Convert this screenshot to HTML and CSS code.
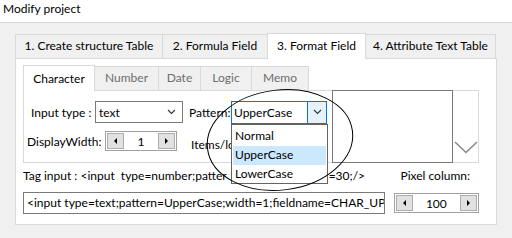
FILE: index.html
```html
<!DOCTYPE html>
<html lang="en">
<head>
    <meta charset="UTF-8">
    <title>Modify project</title>
    <link rel="stylesheet" href="styles.css">
</head>
<body>
    <div class="title">Modify project</div>

    <div class="window">
        <!-- Glowne zakladki -->
        <div class="tabs">
            <div class="tab" style="width: 148px;">1. Create structure Table</div>
            <div class="tab" style="width: 105px;">2. Formula Field</div>
            <div class="tab active" style="width: 99px;">3. Format Field</div>
            <div class="tab" style="width: 130px;">4. Attribute Text Table</div>
        </div>

        <div class="page">
            <!-- Zakladki typu pola -->
            <div class="subtabs">
                <div class="subtab active" style="width: 72px;">Character</div>
                <div class="subtab" style="width: 64px;">Number</div>
                <div class="subtab" style="width: 42px;">Date</div>
                <div class="subtab" style="width: 51px;">Logic</div>
                <div class="subtab" style="width: 57px;">Memo</div>
            </div>

            <div class="subpage">
                <div class="fields">
                    <div class="row row1">
                        <span class="lbl lbl-input">Input type :</span>
                        <div class="select">
                            <span>text</span>
                            <svg class="chev" width="9" height="6" viewBox="0 0 9 6"><polyline points="1,1 4.5,4.5 8,1" fill="none" stroke="#333" stroke-width="1.1"/></svg>
                        </div>
                        <span class="lbl lbl-pattern">Pattern:</span>
                        <div class="combo">
                            <span class="combo-text">UpperCase</span>
                            <div class="combo-btn">
                                <svg width="9" height="6" viewBox="0 0 9 6"><polyline points="1,1 4.5,4.5 8,1" fill="none" stroke="#333" stroke-width="1.1"/></svg>
                            </div>
                            <div class="combo-list">
                                <div class="item">Normal</div>
                                <div class="item selected">UpperCase</div>
                                <div class="item">LowerCase</div>
                            </div>
                        </div>
                    </div>
                    <div class="row row2">
                        <span class="lbl lbl-width">DisplayWidth:</span>
                        <div class="spin spin-small">
                            <div class="spin-btn"><span class="tri-left"></span></div>
                            <span class="spin-val">1</span>
                            <div class="spin-btn"><span class="tri-right"></span></div>
                        </div>
                        <span class="lbl lbl-items">Items/lo</span>
                    </div>
                </div>
                <div class="memo"></div>
                <div class="scroll-arrow">
                    <svg width="24" height="13" viewBox="0 0 24 13"><polyline points="1,1 12,11.5 23,1" fill="none" stroke="#8a8a8a" stroke-width="1.6"/></svg>
                </div>
            </div>

            <div class="tag-row">
                <span class="tag-text">Tag input : &lt;input&nbsp; type=number;patter<span class="tag-gap"></span>=30;/&gt;</span>
                <span class="pixel-lbl">Pixel column:</span>
            </div>

            <div class="out-row">
                <div class="out-field">&lt;input type=text;pattern=UpperCase;width=1;fieldname=CHAR_UPF</div>
                <div class="spin spin-pixel">
                    <div class="spin-btn"><span class="tri-left"></span></div>
                    <span class="spin-val">100</span>
                    <div class="spin-btn"><span class="tri-right"></span></div>
                </div>
            </div>
        </div>
    </div>

    <!-- Zaznaczenie odrecznym kolkiem -->
    <svg class="circle" width="512" height="238" viewBox="0 0 512 238">
        <ellipse cx="280" cy="140" rx="73" ry="50" transform="rotate(-7 280 140)" fill="none" stroke="#000" stroke-width="1"/>
    </svg>
</body>
</html>
```

FILE: styles.css
```css
/* Styl ogolny */
body {
    margin: 0;
    width: 512px;
    height: 238px;
    overflow: hidden;
    background: #fff;
    font-family: Lato, "Noto Sans", sans-serif;
    font-size: 12px;
    color: #000;
    position: relative;
}

.title {
    height: 22px;
    line-height: 17px;
    padding-left: 3px;
    border-bottom: 1px solid #dadada;
}

.window {
    background: #f0f0f0;
    height: 215px;
    padding: 9px 0 0 15px;
    box-sizing: border-box;
}

/* Zakladki */
.tabs {
    display: flex;
    align-items: flex-end;
    height: 26px;
}

.tab {
    box-sizing: border-box;
    height: 24px;
    line-height: 22px;
    text-align: center;
    white-space: nowrap;
    border: 1px solid #d9d9d9;
    border-bottom: none;
    border-left: none;
    background: #f0f0f0;
}

.tab:first-child {
    border-left: 1px solid #d9d9d9;
}

.tab.active {
    height: 26px;
    line-height: 24px;
    background: #fff;
    border-left: 1px solid #d9d9d9;
    margin-left: -1px;
    margin-bottom: -1px;
    position: relative;
    z-index: 1;
}

.page {
    box-sizing: border-box;
    width: 482px;
    height: 167px;
    background: #fff;
    border: 1px solid #d9d9d9;
    padding: 5px 17px 0 7px;
}

.subtabs {
    display: flex;
    align-items: flex-end;
    height: 26px;
}

.subtab {
    box-sizing: border-box;
    height: 24px;
    line-height: 22px;
    text-align: center;
    color: #6d6d6d;
    background: #f0f0f0;
    border: 1px solid #d9d9d9;
    border-bottom: none;
    border-left: none;
}

.subtab.active {
    height: 26px;
    line-height: 25px;
    color: #000;
    background: #fff;
    border-left: 1px solid #d9d9d9;
    margin-bottom: -1px;
    position: relative;
    z-index: 1;
}

.subpage {
    box-sizing: border-box;
    height: 73px;
    border: 1px solid #d9d9d9;
    display: flex;
}

.fields {
    width: 308px;
    position: relative;
    z-index: 2;
}

.row {
    display: flex;
    align-items: center;
}

.row1 {
    margin-top: 10px;
    height: 22px;
}

.row2 {
    margin-top: 8px;
    height: 20px;
}

.lbl { white-space: nowrap; }
.lbl-input { margin-left: 7px; width: 64px; }
.lbl-pattern { margin-left: 6px; width: 42px; }
.lbl-width { margin-left: 3px; width: 78px; }
.lbl-items { margin-left: 14px; margin-top: 6px; }

.select {
    box-sizing: border-box;
    width: 88px;
    height: 22px;
    border: 1px solid #7a7a7a;
    display: flex;
    align-items: center;
    justify-content: space-between;
    padding: 0 6px 0 3px;
}

.combo {
    box-sizing: border-box;
    width: 96px;
    height: 23px;
    border: 1px solid #0078d7;
    display: flex;
    align-items: center;
    position: relative;
    background: #fff;
}

.combo-text {
    flex: 1;
    padding-left: 2px;
}

.combo-btn {
    box-sizing: border-box;
    width: 19px;
    height: 21px;
    background: #e5f1fb;
    border-left: 1px solid #0078d7;
    display: flex;
    align-items: center;
    justify-content: center;
}

.combo-list {
    position: absolute;
    left: -1px;
    top: 22px;
    box-sizing: border-box;
    width: 97px;
    height: 60px;
    background: #fff;
    border: 1px solid #646464;
    padding: 2px 1px 0 1px;
    z-index: 5;
}

.item {
    height: 19px;
    line-height: 18px;
    padding-left: 2px;
}

.item.selected {
    background: #cce8ff;
}

/* Pola liczbowe */
.spin {
    box-sizing: border-box;
    border: 1px solid #a0a0a0;
    display: flex;
    align-items: center;
    justify-content: space-between;
    padding: 0 1px;
}

.spin-small { width: 72px; height: 20px; }
.spin-pixel { width: 87px; height: 20px; }

.spin-btn {
    box-sizing: border-box;
    width: 17px;
    height: 16px;
    background: #e1e1e1;
    border: 1px solid #adadad;
    display: flex;
    align-items: center;
    justify-content: center;
}

.spin-val {
    flex: 1;
    text-align: center;
}

.tri-left {
    width: 0;
    height: 0;
    border-top: 3px solid transparent;
    border-bottom: 3px solid transparent;
    border-right: 3px solid #000;
}

.tri-right {
    width: 0;
    height: 0;
    border-top: 3px solid transparent;
    border-bottom: 3px solid transparent;
    border-left: 3px solid #000;
}

.memo {
    box-sizing: border-box;
    width: 121px;
    height: 73px;
    margin: -1px 0 0 1px;
    border: 1px solid #7a7a7a;
}

.scroll-arrow {
    padding: 50px 0 0 1px;
}

.tag-row {
    display: flex;
    justify-content: space-between;
    height: 29px;
    line-height: 26px;
    white-space: nowrap;
}

.tag-gap {
    display: inline-block;
    width: 102px;
}

.pixel-lbl {
    margin-right: 9px;
}

.out-row {
    display: flex;
    align-items: center;
    gap: 9px;
}

.out-field {
    box-sizing: border-box;
    width: 369px;
    height: 22px;
    line-height: 20px;
    border: 1px solid #7a7a7a;
    padding-left: 3px;
    white-space: nowrap;
    overflow: hidden;
}

.circle {
    position: absolute;
    left: 0;
    top: 0;
    pointer-events: none;
    z-index: 10;
}
```
